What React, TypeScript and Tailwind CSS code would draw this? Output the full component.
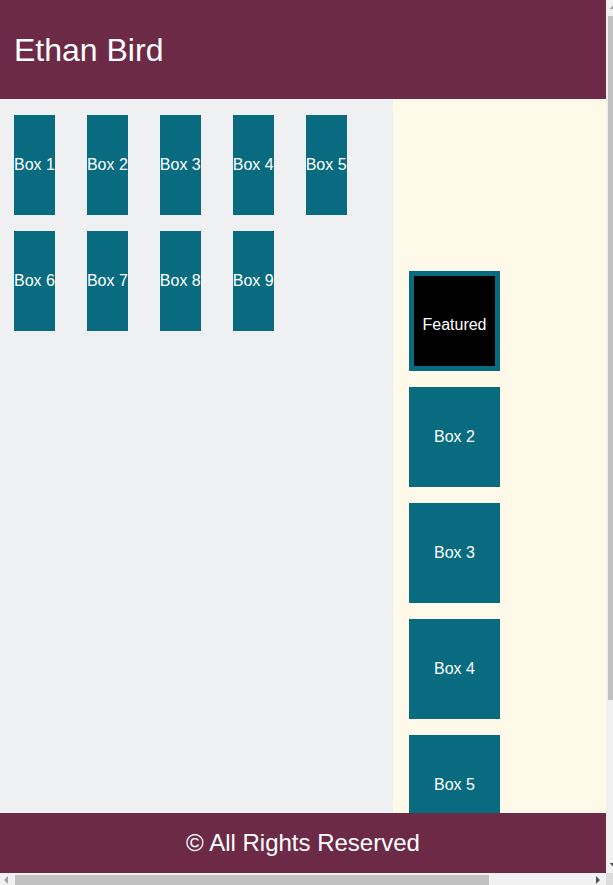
import React from "react";

const font = { fontFamily: '"Liberation Sans", Arial, sans-serif' };

function Tri({ points, color }: { points: string; color: string }) {
  return (
    <svg width="15" height="15" viewBox="0 0 15 15" className="block shrink-0">
      <polygon points={points} fill={color} />
    </svg>
  );
}

export default function App() {
  const grid = ["Box 1", "Box 2", "Box 3", "Box 4", "Box 5", "Box 6", "Box 7", "Box 8", "Box 9"];
  const side = ["Box 2", "Box 3", "Box 4", "Box 5"];
  return (
    <div
      style={font}
      className="grid h-[885px] w-[613px] grid-cols-[606px_7px] grid-rows-[873px_12px] overflow-hidden bg-white text-white"
    >
      {/* page viewport */}
      <div className="flex h-[873px] flex-col overflow-hidden">
        <header className="flex h-[99px] shrink-0 items-center bg-[#6c2a46] px-[14px]">
          <h1 className="text-[32px] leading-none">Ethan Bird</h1>
        </header>
        <main className="flex min-h-0 flex-1 overflow-hidden">
          <section className="w-[393px] shrink-0 bg-[#eff0f2] px-[14px] pt-4">
            <div className="flex flex-wrap gap-x-8 gap-y-4">
              {grid.map((b) => (
                <div
                  key={b}
                  className="flex h-[100px] items-center whitespace-nowrap bg-[#086b80] text-[16px]"
                >
                  {b}
                </div>
              ))}
            </div>
          </section>
          <aside className="flex-1 bg-[#fff9ea] pl-4 pt-[172px]">
            <div className="flex flex-col gap-4">
              <div className="flex h-[100px] w-[91px] shrink-0 items-center justify-center border-[5px] border-[#086b80] bg-black pt-[7px] text-[16px]">
                Featured
              </div>
              {side.map((b) => (
                <div
                  key={b}
                  className="flex h-[100px] w-[91px] shrink-0 items-center justify-center bg-[#086b80] text-[16px]"
                >
                  {b}
                </div>
              ))}
            </div>
          </aside>
        </main>
        <footer className="flex h-[60px] shrink-0 items-center justify-center bg-[#6c2a46] text-[24px]">
          © All Rights Reserved
        </footer>
      </div>

      {/* vertical scrollbar */}
      <div className="flex h-[873px] flex-col overflow-hidden bg-[#f1f1f1]">
        <div className="h-[16px] w-[15px] shrink-0">
          <Tri points="7.5,5 3.5,9 11.5,9" color="#a3a3a3" />
        </div>
        <div className="ml-[2px] h-[684px] w-[9px] shrink-0 bg-[#c1c1c1]" />
        <div className="flex-1" />
        <div className="h-[15px] w-[15px] shrink-0">
          <Tri points="3.5,5 11.5,5 7.5,9" color="#505050" />
        </div>
      </div>

      {/* horizontal scrollbar */}
      <div className="flex h-[12px] overflow-hidden bg-[#f1f1f1]">
        <div className="h-[15px] w-[15px] shrink-0">
          <Tri points="4,7 8,3 8,11" color="#a3a3a3" />
        </div>
        <div className="mt-[2px] h-[10px] w-[474px] shrink-0 bg-[#c1c1c1]" />
        <div className="flex-1" />
        <div className="h-[15px] w-[15px] shrink-0">
          <Tri points="5,3 9,7 5,11" color="#505050" />
        </div>
      </div>

      {/* corner */}
      <div className="bg-[#dcdcdc]" />
    </div>
  );
}
